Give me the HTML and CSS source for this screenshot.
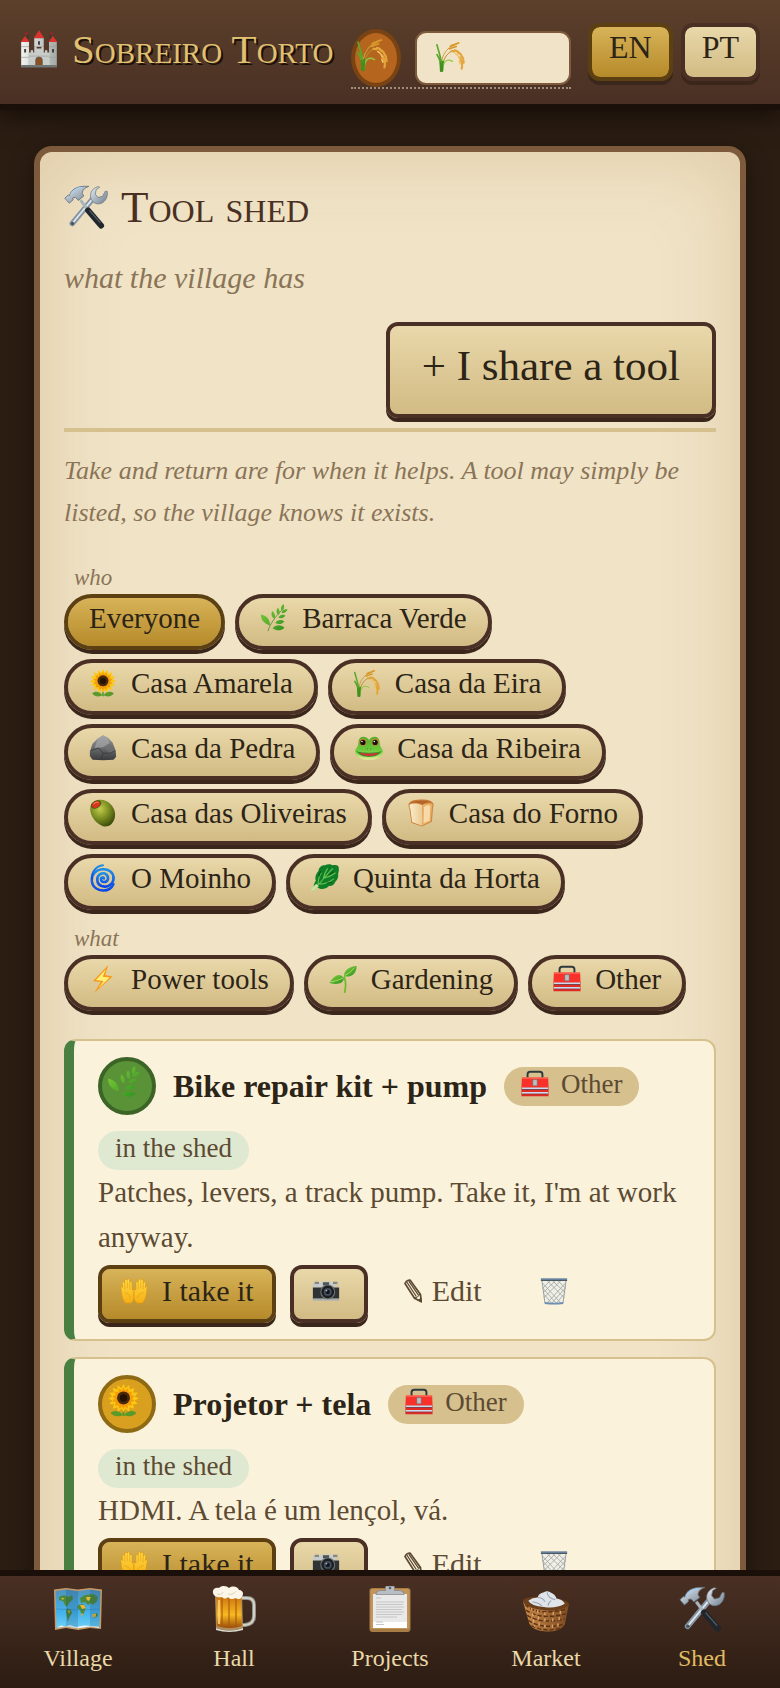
FILE: index.html
```html
<!DOCTYPE html>
<html lang="en">
<head>
<meta charset="utf-8">
<meta name="viewport" content="width=device-width, initial-scale=1">
<title>Sobreiro Torto – Tool shed</title>
<link rel="stylesheet" href="styles.css">
</head>
<body>
<svg class="sprite" width="0" height="0" aria-hidden="true">
  <defs>
    <linearGradient id="g-stone" x1="0" x2="1"><stop offset="0" stop-color="#f2f3f0"/><stop offset="1" stop-color="#a4a9a6"/></linearGradient>
    <linearGradient id="g-steel" x1="0" y1="0" x2="1" y2="1"><stop offset="0" stop-color="#e6eef6"/><stop offset="1" stop-color="#6f7d8c"/></linearGradient>
    <linearGradient id="g-leaf" x1="0" y1="0" x2="1" y2="1"><stop offset="0" stop-color="#86d23c"/><stop offset="1" stop-color="#2c8f1f"/></linearGradient>
    <linearGradient id="g-rock" x1="0" y1="0" x2="0" y2="1"><stop offset="0" stop-color="#9a9b9d"/><stop offset="1" stop-color="#3a3b3d"/></linearGradient>
    <radialGradient id="g-olive" cx=".4" cy=".35" r=".7"><stop offset="0" stop-color="#c3cc4e"/><stop offset=".5" stop-color="#7d9022"/><stop offset="1" stop-color="#3d4c0b"/></radialGradient>
    <linearGradient id="g-frog" x1="0" y1="0" x2="0" y2="1"><stop offset="0" stop-color="#4fae2d"/><stop offset=".6" stop-color="#6ecb3e"/><stop offset="1" stop-color="#e5ee9a"/></linearGradient>
    <linearGradient id="g-bread" x1="0" x2="1"><stop offset="0" stop-color="#fbeccb"/><stop offset="1" stop-color="#eacb92"/></linearGradient>
    <linearGradient id="g-swirl" x1="0" y1="0" x2="0" y2="1"><stop offset="0" stop-color="#1e8fe8"/><stop offset="1" stop-color="#0a46e6"/></linearGradient>
    <linearGradient id="g-beer" x1="0" y1="0" x2="0" y2="1"><stop offset="0" stop-color="#c9700e"/><stop offset=".6" stop-color="#f7b922"/><stop offset="1" stop-color="#9a4a08"/></linearGradient>
    <linearGradient id="g-hand" x1="0" y1="0" x2="0" y2="1"><stop offset="0" stop-color="#ffdc45"/><stop offset="1" stop-color="#f5ae14"/></linearGradient>
    <linearGradient id="g-basket" x1="0" x2="1"><stop offset="0" stop-color="#c9894a"/><stop offset="1" stop-color="#7d4a22"/></linearGradient>
    <linearGradient id="g-sea" x1="0" y1="0" x2="0" y2="1"><stop offset="0" stop-color="#4f93bd"/><stop offset=".6" stop-color="#44b3ee"/><stop offset="1" stop-color="#6fd0f5"/></linearGradient>
  </defs>

  <symbol id="castle" viewBox="0 0 32 32">
    <path d="M6.500 3v4M25.500 3v4" stroke="#333" stroke-width=".7"/>
    <path d="M2.800 3.200L6.500 1.600v2.600zM25.500 1.600l3 1.400-3 1.200z" fill="#a3222c"/>
    <path d="M0.500 10L4.300 5l3.800 5zM23.900 10l3.800-5 3.800 5zM11.500 7L16 .3 20.500 7z" fill="#d9342f"/>
    <path d="M12 7h8v7h-8zM1 10h6.600v21H1zM24.400 10H31v21h-6.600z" fill="url(#g-stone)"/>
    <path d="M7 19h2v-2h2v2h1v-5h2v1.500h4V14h2v5h1v-2h2v2h2v12H7z" fill="#c9cdca"/>
    <path d="M1 14h6.600M24.400 14H31M1 23h6.600M24.400 23H31M7.600 22h16.800" stroke="#9a9f9b" stroke-width=".6"/>
    <path d="M3.500 16h1.600v3H3.500zM27 16h1.600v3H27zM15.200 9.500h1.600v3h-1.600z" fill="#3b3f40"/>
    <path d="M13.200 30v-4.500a2.800 2.800 0 015.600 0V30z" fill="#8a4f20" stroke="#55595a" stroke-width=".6"/>
    <path d="M1 29.500h30V31.500H1z" fill="#6f7573"/>
  </symbol>

  <symbol id="wheat" viewBox="0 0 32 32">
    <g fill="none" stroke-linecap="round">
      <path d="M6 30C6 20 8 12 16 6l7-3" stroke="#c9a03e" stroke-width="1"/>
      <path d="M7 30c1-11 5-18 12-20 5-1 9 3 9 8" stroke="#b98b2d" stroke-width="1"/>
      <path d="M16 5.500l2-1.400M19 4.200l2.400-1.200M22.500 2.600l2-.6M15 8l3-1M19 6.500l3-.8" stroke="#d9982a" stroke-width="1.800"/>
      <path d="M17 10.500l3 .2M20.500 9.500l2.500 1M23 11l2 1.800M25.500 12.500l1.800 2.400M27.500 15.500l1.600 2.600M25.500 17l1.500 3M27 21l1 3.500M29.200 19.500l.4 3M28 25.500l-.4 3" stroke="#e3a53a" stroke-width="2.200"/>
      <path d="M21 13l2.500 2M24 15.500l1.500 3M25 20.500l1 3" stroke="#f0c268" stroke-width="1.500"/>
      <path d="M7 29C8 22 4 12 2 4M7 29c-1-8-3-12-5-15" stroke="#57a82c" stroke-width="1.700"/>
      <path d="M8 30c0-7 3-13 10-9" stroke="#8ecb45" stroke-width="1.300"/>
      <path d="M5.500 22l.5 9M8 21l-.5 10" stroke="#3f8f1e" stroke-width="1.900"/>
    </g>
  </symbol>

  <symbol id="tools" viewBox="0 0 32 32">
    <path d="M20.500 10.500L6 28" stroke="#8593a1" stroke-width="4" stroke-linecap="round"/>
    <path d="M20 11L6 28" stroke="#dfe6ee" stroke-width="1.300" stroke-linecap="round"/>
    <path d="M24.500 1.200C20.500 2.500 18.500 6 19.500 9.500c.8 2.700 3.300 4.500 6 4.200 3.700-.4 6.500-4 6-9l-1.500-.2-1.900 3.700-3.400.9-2-2.500.8-3.400L26 1.600z" fill="url(#g-steel)" stroke="#66717d" stroke-width=".5"/>
    <circle cx="6.200" cy="28" r="1.200" fill="#49535d"/>
    <path d="M12 11l6 8" stroke="#a9b4be" stroke-width="2.200"/>
    <path d="M17.500 18.500L27 29.500" stroke="#20262b" stroke-width="4.300" stroke-linecap="round"/>
    <path d="M18.500 18.500l8 9" stroke="#59636b" stroke-width=".8"/>
    <path d="M.6 9.600L3 7.300l1 .4C5 3.600 9 .3 18 1c-2.500.9-4.400 2-4.800 5l1.200 2-4 3.200-2-2.200-2 .4.200 1.400-2.800 2.400z" fill="url(#g-steel)" stroke="#5f7080" stroke-width=".6"/>
    <path d="M5 7c2-3.500 4.500-4.800 8-5" stroke="#a9cdf0" stroke-width="1" fill="none"/>
  </symbol>

  <symbol id="herb" viewBox="0 0 32 32">
    <path d="M9 31C12 22 17 15 26 6" stroke="#57923a" stroke-width="1" fill="none"/>
    <g fill="url(#g-leaf)">
      <path d="M27 0c1.500 3.500.5 6.500-2 8-2-3-1-6 2-8zM31.500 6c-1 3.200-3.500 5-6.800 4.300C25 7.300 28 5.400 31.500 6zM20.500 4c2.300 3 2.600 6 1 8.500-3-1.500-3.500-5-1-8.500zM14 8c3 2.500 4 5.600 3 9-3.600-1.500-4.800-5-3-9zM29 13c-1.700 3-4.800 4-8 2.700C22.300 12.600 25.500 11.400 29 13zM1 12c7 1.500 10.500 6 10.500 12.500C5 22.500 1 19 1 12zM28 20c-3 3.300-6.700 3.700-10.500 1.600C20 18 24 17.400 28 20zM28 27c-4.200 3.800-9 3.800-13.500.6C18 23.500 23.500 23.400 28 27z"/>
    </g>
  </symbol>

  <symbol id="sunflower" viewBox="0 0 32 32">
    <path d="M16 20v11" stroke="#4c9a2b" stroke-width="1.800"/>
    <path d="M15.500 30C12 25.500 7 25 3.500 28c3 3.500 8 4.300 12 2zM16.500 30c3.500-4.500 8.500-5 12-2-3 3.500-8 4.300-12 2z" fill="#5a9a2b"/>
    <path d="M16 0l2 4 3.500-3 .5 4.400 4.500-1.600-1.200 4.400 4.600.2-2.900 3.600 4 2-4.300 2 3 3.500-4.600.2 1.300 4.300-4.500-1.500L21.500 27 18 23.700 16 27.500l-2-3.800L10.500 27l-.4-4.500L5.600 24l1.300-4.300-4.600-.2 3-3.500L1 14l4-2-2.900-3.600 4.600-.2L5.500 3.800 10 5.400l.5-4.400L14 4z" fill="#fdc713"/>
    <path d="M16 3l1.500 3 3-2 .5 3.700 3.500-.5-1 3.500 3.500 1-2.600 2.300 2.400 2.600-3.400.9.800 3.500-3.600-.6-.8 3.500-2.600-2L16 25l-1.300-3-2.700 2-.8-3.500-3.500.6.700-3.500-3.400-.9 2.500-2.600L5 11.800l3.400-1-1-3.600 3.600.5.500-3.700 3 2z" fill="#f49f0a"/>
    <circle cx="16" cy="13.500" r="6.300" fill="#4b2a08"/><circle cx="16" cy="13.500" r="3.600" fill="#241203"/>
  </symbol>

  <symbol id="rock" viewBox="0 0 32 32">
    <path d="M1 20l3-9 6-6 6-3.500 6 3 5 5.500 3.500 9 .5 7-3 3.500L16 30 4 29.500 1 25z" fill="url(#g-rock)"/>
    <path d="M10 5l6-3.500 6 3 1.500 6-7 4.500-10 1z" fill="#a8a9ab" opacity=".65"/>
    <path d="M23.500 10.500l7 8.500-7 3-7-7z" fill="#6f7072" opacity=".7"/>
    <path d="M2 19l9-3 5 6-2 7" fill="none" stroke="#2f3032" stroke-width=".8"/>
    <path d="M16 22l8 0 6-3" fill="none" stroke="#303133" stroke-width=".7"/>
  </symbol>

  <symbol id="frog" viewBox="0 0 32 32">
    <path d="M16 7c2-5 11-6 12 1 .4 2.500 0 4 1 6 1.300 2.500 3 4 3 6.500C31 26.500 25 29.500 16 29.500S1 26.500 0 20.500C0 18 1.700 16.500 3 14c1-2 .6-3.500 1-6C5 1 14 2 16 7z" fill="url(#g-frog)"/>
    <path d="M1.500 19.500c6 2.500 23 2.500 29 0-2.500 5-8 6.700-14.500 6.700S4 24.500 1.500 19.500z" fill="#3f8f22"/>
    <path d="M5 21.500c6 1.300 16 1.300 22 0-3 3.200-6 3.600-11 3.600s-8-.4-11-3.600z" fill="#d2323a"/>
    <circle cx="9" cy="9.500" r="4.300" fill="#c08a2a"/><circle cx="23" cy="9.500" r="4.300" fill="#c08a2a"/>
    <circle cx="9" cy="9.700" r="3" fill="#14130f"/><circle cx="23" cy="9.700" r="3" fill="#14130f"/>
    <circle cx="8" cy="8.500" r=".9" fill="#fff"/><circle cx="22" cy="8.500" r=".9" fill="#fff"/>
    <path d="M14 16.500v1M18 16.500v1" stroke="#256b12" stroke-width="1"/>
  </symbol>

  <symbol id="olive" viewBox="0 0 32 32">
    <path d="M2 8C5 1 13-1 20 2.500c7 3.600 11 11 9.500 18.500C28 28.500 22 32.500 16 31 7 28.500-1 16 2 8z" fill="url(#g-olive)"/>
    <ellipse cx="8" cy="6.300" rx="6.300" ry="4.300" transform="rotate(-28 8 6.300)" fill="#4d5a10"/>
    <ellipse cx="8" cy="6.300" rx="5" ry="3.400" transform="rotate(-28 8 6.300)" fill="#d5341f"/>
    <path d="M5 6c1.500-2 4-2.700 6-2" stroke="#f07b5a" stroke-width="1.200" fill="none"/>
  </symbol>

  <symbol id="bread" viewBox="0 0 32 32">
    <path d="M2 5C4 1.500 10 .5 17 .5S28.500 2 30 5c.8 2.600 0 4-.5 6L28.500 26l-11.500 5.500L5 27 3 12C2 9.500 1.300 7.500 2 5z" fill="#c97d38"/>
    <path d="M3 6.500c4-2 10-1.500 14.500.5L17 30.500 5.800 26.200 4 12C3.200 10 2.500 8.500 3 6.500z" fill="url(#g-bread)"/>
    <path d="M17.500 7C21 4.500 28 4 29 6c.6 2-.4 3.500-.6 5L27.500 25.500 17 30.500z" fill="#e9b168"/>
    <path d="M19.500 9c2.500-2 6-2.500 7-1l-.8 16.500-6.700 3z" fill="#f6dba9"/>
    <path d="M4 4.500C8 1.500 24 1 28.500 4 24 3.400 20 4.500 17.500 6 13 4.300 8 4 4 4.500z" fill="#b4642a"/>
  </symbol>

  <symbol id="cyclone" viewBox="0 0 32 32">
    <g fill="none" stroke="url(#g-swirl)" stroke-linecap="round">
      <path d="M17 16.500c0-2-3.500-1.500-3.300 1.200.3 3.600 6.300 4 7.700.3C23 12.800 18 9.300 13.700 11.200 7.500 14 8.400 23 14.500 25.200c7.500 2.500 14-3.200 13.500-10" stroke-width="3"/>
      <path d="M28 16C28 9 22 5.500 15.500 6 7 6.700 2.500 13 3.200 19.500 4 26.500 10 30.500 16.500 30.300c5 0 9.500-3 11.500-7.300" stroke-width="2.800"/>
      <path d="M3.500 17C2.500 9 8 2.500 16 1.500" stroke-width="2.200"/>
    </g>
  </symbol>

  <symbol id="greens" viewBox="0 0 32 32">
    <path d="M3 27c0-3 .5-5 2.500-8C4 15 6 10.500 8.500 8 9 4 12 1 16 1.500 19-.5 23 0 24.500 1.500c3-1 7-.5 7 2 .5 2.500.5 5-.5 7.500.5 4-.5 7-3 9-1.500 4-4.500 5.500-7.500 5C16 29.500 11 29 8 27z" fill="#0f7f27"/>
    <path d="M1.500 31C9 24 16 14 25 5M8 24c0-6 1-10 4-14M10 23c6 0 11-2 16-6M14 17c1-5 2-8 5-12M15 16c5-1 9-3 13-6" stroke="#6cc452" stroke-width="1.200" fill="none"/>
    <path d="M0 30.500c1-3 3-5.500 6-8l3 3c-3 3-5 4.500-8 6z" fill="#c6e2a0"/>
    <path d="M18 22l6-1M21 12l5-3M9 14l2-6" stroke="#0b5a1a" stroke-width="1.400"/>
  </symbol>

  <symbol id="bolt" viewBox="0 0 32 32">
    <path d="M22 0L4.500 18.500l9 1L6 32 27 13l-8.500-1.500z" fill="#f79a1c"/>
    <path d="M19.500 4.500L8 17.200l8.500 1L11 26.500 23.500 14.300l-8-1z" fill="#fff176"/>
  </symbol>

  <symbol id="seedling" viewBox="0 0 32 32">
    <path d="M18 31c1.500-7 1.500-12-.5-17" stroke="#6dbb2b" stroke-width="2" fill="none" stroke-linecap="round"/>
    <path d="M17 13C17 6 23 1.500 31.500 1c.3 8-5.500 13.500-14.500 12z" fill="url(#g-leaf)"/>
    <path d="M17 15.500C14 8.500 6 10.500.5 20.500c7 2 15.500 2 16.500-5z" fill="url(#g-leaf)"/>
    <path d="M18 12c4-2 8-5 11-9M2 19.500c5-1 9-2.500 14-4.500" stroke="#c6ee7a" stroke-width=".8" fill="none"/>
  </symbol>

  <symbol id="toolbox" viewBox="0 0 32 32">
    <path d="M7.500 9V5q0-3 3-3h11q3 0 3 3v4" stroke="#2d3b3e" stroke-width="2.200" fill="none"/>
    <path d="M1 8.500h30l.5 11H.5z" fill="#f8322a"/><path d="M1 8.500h30v1.500H1z" fill="#ff6a58"/>
    <path d="M.5 19.500h31V30H.5z" fill="#e02a24"/>
    <path d="M1 20h30v2H1zM1 25h30v2H1z" fill="#cdd9ee"/>
    <path d="M1 22h30v.8H1zM1 27h30v.8H1z" fill="#5c3c4c"/>
    <path d="M13.500 11h5v7h-5z" fill="#b8c0c4" stroke="#626b70" stroke-width=".6"/>
  </symbol>

  <symbol id="hands" viewBox="0 0 32 32">
    <path d="M1 13c-1-2 1-3 2-1L2.500 7c0-2 2.500-2 2.800 0L5.500 4c.2-2 2.700-2 2.800 0v0c.2-2.500 2.800-2.300 2.800-.3l.2 2.300c1-1.600 2.600-.8 2.500 1L14 15c.8-1.500 2-1.500 2 .5v8c0 3-2 5.500-4 6.500H6.500C3 27 1.500 20 1 13z" fill="url(#g-hand)" stroke="#db8f12" stroke-width=".7"/>
    <path d="M31 13c1-2-1-3-2-1l.5-5c0-2-2.500-2-2.800 0l-.2-3c-.2-2-2.700-2-2.800 0v0c-.2-2.500-2.800-2.300-2.800-.3L20.700 6c-1-1.600-2.600-.8-2.500 1L18 15c-.8-1.500-2-1.500-2 .5v8c0 3 2 5.500 4 6.500h5.500C29 27 30.500 20 31 13z" fill="url(#g-hand)" stroke="#db8f12" stroke-width=".7"/>
    <path d="M5.500 7v7M8.300 5v8M11.200 6v8M26.500 7v7M23.700 5v8M20.800 6v8M5 18c3 0 6 2 7 6M27 18c-3 0-6 2-7 6" stroke="#df9a16" stroke-width=".7" fill="none"/>
  </symbol>

  <symbol id="camera" viewBox="0 0 32 32">
    <path d="M1 7h9l1-2h10l1 2h9v5H1z" fill="#c6cacb"/><path d="M3 5.500h5V8H3zM24 5.500h5V8h-5z" fill="#83898b"/>
    <path d="M1 12h30v13H1z" fill="#303334"/><path d="M1 24.500h30v2.500H1z" fill="#a9aeb0"/>
    <path d="M12.500 6h7v3.500h-7z" fill="#4c5356"/>
    <circle cx="18" cy="17" r="8.500" fill="#6b7072"/><circle cx="18" cy="17" r="7.200" fill="#1c1f21"/><circle cx="18" cy="17" r="4.500" fill="#46505c"/><circle cx="18" cy="17" r="2.500" fill="#12161b"/><circle cx="16.500" cy="15.500" r="1" fill="#a9b9c9"/>
    <circle cx="28" cy="9.500" r="1.300" fill="#f5c84c"/>
  </symbol>

  <symbol id="pencil" viewBox="0 0 18 24">
    <path d="M1 4.500Q2.500 1 6 1l10.500 14.500.8 7.300-6.800-3.500z" fill="none" stroke="currentColor" stroke-width="1.700" stroke-linejoin="round"/>
    <path d="M2.800 3l9.500 14.500M4.800 2.200l9.700 14" stroke="currentColor" stroke-width="1.300"/>
    <path d="M10.500 19l3-1 2.500-3 1.500 8z" fill="none" stroke="currentColor" stroke-width="1"/><path d="M14 21l2.500-2 1 4z" fill="currentColor"/>
  </symbol>

  <symbol id="trash" viewBox="0 0 32 32">
    <path d="M2 3h28l-3.500 27.500q-10.500 2-21 0z" fill="#f1efe4"/>
    <path d="M3 7l22 24M3.500 13l16 18M5 20l9 11M8 4l20 20M14 4l15 14M20 4l9.500 9M29 7L7 31M28.500 13l-16 18M27 20l-9 11M24 4L4 24M18 4L3.500 18M12 4l-9 9" stroke="#9aa2a6" stroke-width=".9"/>
    <path d="M2.200 4l3.500 26M29.800 4l-3.500 26" stroke="#8b969e" stroke-width="1"/>
    <path d="M1 1.500h30v2H1z" fill="#64809c"/><path d="M1 3.500h30v1H1z" fill="#3a4652"/>
    <path d="M5.300 28.500q10.700 1.800 21.400 0l-.3 2.300q-10.400 1.500-20.800 0z" fill="#6f8eb3"/>
  </symbol>

  <symbol id="map" viewBox="0 0 48 42">
    <path d="M0 1.500L12 0l12 1.500L36 0l12 1.500-1 39.500-11-1-12 2-12-2L1 42z" fill="#c99a68"/>
    <path d="M1.500 3L12 1.500 24 3l12-1.500L46.500 3l-1 36.500L36 38.500 24 40.300 12 38.500 2.500 40z" fill="url(#g-sea)"/>
    <path d="M5 9l5-2 5 2 3-2 1 4-4 4-2 4-2-2-2-4-4-1zM13 20l4 2 1 3-3 5-1 4-1-5-1-5zM26 10l5-3 8-1 5 3-1 4-4 4-2-2-3 2-3-3-4 1zM24 17l5-1 3 3-2 6-2 3-2-6-3-2zM39 26l4-1 1 3-4 2z" fill="#4e8a3b"/>
    <path d="M26 17l4 0 2 3-4 1zM32 9l5 0-2 4-2-1zM14 22l2 1-1 3zM38 26l4-.5 0 3-3 1zM27 26l2-1-1 4zM7 10l3 0-1 2z" fill="#e8b83a"/>
    <path d="M3 39.500l4-2 4 1 5-1.500 6 2 8-1.500 8 .5 7 .5v1.500l-9-1.500-12 1.800-12-1.800z" fill="#f1f5f5"/>
    <path d="M12 1.500L24 3v37l-12-1.500zM36 1.500L46.500 3l-1 36.500L36 38.500z" fill="#123a5c" opacity=".18"/>
    <path d="M2 21q22 2 44 0" stroke="#24608c" stroke-width=".6" opacity=".5" fill="none"/>
  </symbol>

  <symbol id="beer" viewBox="0 0 44 46">
    <path d="M28 12h7q7 0 7 7v11q0 8-9 9h-5" fill="none" stroke="#8f9288" stroke-width="4"/>
    <path d="M28 12h7q7 0 7 7v11q0 8-9 9h-5" fill="none" stroke="#d3d1c6" stroke-width="2"/>
    <path d="M3 8h27l1 34q-14 5-27 0z" fill="#b08d5c"/><path d="M4.500 9H29l.8 31q-12 4-25 0z" fill="url(#g-beer)"/>
    <path d="M10 12v28M17 12v29M24 12v28" stroke="#a8580b" stroke-width="1.800" opacity=".6"/><path d="M7 14v24" stroke="#ffd97c" stroke-width="1.500"/>
    <path d="M1 7c-1-4 3-6 6-5 3-3 8-2 10 0 4-3 9-1 10 2 4 0 5 4 3 7-2 3-5 2-7 1-2 2-6 1-7-1-3 3-5 1-6 0-3 1-8 0-9-4z" fill="#fbf6e8"/>
    <path d="M5 8c3 1 5 0 6-2M16 8c4 1 7-1 8-3" stroke="#ddd2bb" fill="none"/>
    <path d="M4 42q13 5 27 0v2q-14 4-27 0z" fill="#dcdcd3"/>
  </symbol>

  <symbol id="clipboard" viewBox="0 0 42 46">
    <rect x=".5" y="2" width="41" height="44" rx="3" fill="#a87c45"/><rect x="1.500" y="3" width="39" height="40" rx="2" fill="#c2965a"/>
    <path d="M4 8h34v34H4z" fill="#e9e9e9"/><path d="M4 36h34v6H4z" fill="#fff"/>
    <path d="M7 12h5M7 16h28M7 18.500h27M7 21h28M7 23.500h26M7 26h28M7 28.500h26M7 31h21M7 36h7M7 38.500h8" stroke="#c6c6c6" stroke-width="1.200"/>
    <path d="M7 8.500q0-3.500 4-4h5.500V1q0-1 1.500-1h6q1.500 0 1.500 1v3.500H31q4 .5 4 4z" fill="#b9bec4" stroke="#7e8389" stroke-width=".7"/><circle cx="21" cy="2" r="1.300" fill="#596069"/>
  </symbol>

  <symbol id="basket" viewBox="0 0 46 44">
    <path d="M6 16C3 6 4 1 8 1s6 6 6 12M34 18C28 8 32 3 38 3s7 8 5 17" fill="none" stroke="#4a2d18" stroke-width="2"/>
    <path d="M1 15q22-7 44 2l-4 20q-5 7-18 6.500Q10 43 7 36z" fill="url(#g-basket)"/>
    <path d="M3 18q12 11 40 4M4 23q14 10 38 3.500M5 28q14 9 36 3.500M6 33q14 9 34 3.500M9 38q14 7 29 2" stroke="#5a3314" stroke-width="1.400" fill="none" stroke-dasharray="4 2"/>
    <path d="M9 20l3 19M15 23l2 18M22 25v18M30 25l-1 17M37 24l-3 16" stroke="#e0a868" stroke-width="1.300" stroke-dasharray="3 3"/>
    <path d="M1 15q-1-3 6-4 20-3 34 3 5 2 4 5-10 6-24 4Q3 21 1 15z" fill="#6b3f1c"/>
    <path d="M6 14q4-3 9-3 1-4 6-5 3-2 6 0 5 2 6 6 6 1 8 5-9 5-20 3Q9 19 6 14z" fill="#dfe3ea"/>
    <path d="M15 11q5 0 7 4M24 6q1 6 8 7M10 15q6 1 9 4M28 14q-3 2-3 5" stroke="#9da5b3" fill="none"/>
  </symbol>
</svg>

<div class="app">
  <header class="topbar">
    <a class="brand" href="#village"><svg class="icon icon-brand"><use href="#castle"/></svg><span>Sobreiro Torto</span></a>
    <div class="whoami">
      <span class="avatar avatar-eira"><svg class="icon icon-avatar"><use href="#wheat"/></svg></span>
      <label class="house-field"><svg class="icon icon-field"><use href="#wheat"/></svg><input type="text" aria-label="Your house"></label>
    </div>
    <div class="langs">
      <button class="btn lang gold" type="button">EN</button>
      <button class="btn lang" type="button">PT</button>
    </div>
  </header>

  <main class="page">
    <section class="panel">
      <div class="panel-head">
        <h1><svg class="icon icon-title"><use href="#tools"/></svg><span>Tool shed</span></h1>
        <p class="tagline">what the village has</p>
        <button class="btn share" type="button">+ I share a tool</button>
      </div>
      <p class="hint">Take and return are for when it helps. A tool may simply be listed, so the village knows it exists.</p>

      <p class="group-label who" id="who">who</p>
      <div class="chips" role="group" aria-labelledby="who">
        <button class="btn chip gold" type="button">Everyone</button>
        <button class="btn chip" type="button"><svg class="icon"><use href="#herb"/></svg>Barraca Verde</button>
        <button class="btn chip" type="button"><svg class="icon"><use href="#sunflower"/></svg>Casa Amarela</button>
        <button class="btn chip" type="button"><svg class="icon"><use href="#wheat"/></svg>Casa da Eira</button>
        <button class="btn chip" type="button"><svg class="icon"><use href="#rock"/></svg>Casa da Pedra</button>
        <button class="btn chip" type="button"><svg class="icon"><use href="#frog"/></svg>Casa da Ribeira</button>
        <button class="btn chip" type="button"><svg class="icon"><use href="#olive"/></svg>Casa das Oliveiras</button>
        <button class="btn chip" type="button"><svg class="icon"><use href="#bread"/></svg>Casa do Forno</button>
        <button class="btn chip" type="button"><svg class="icon"><use href="#cyclone"/></svg>O Moinho</button>
        <button class="btn chip" type="button"><svg class="icon"><use href="#greens"/></svg>Quinta da Horta</button>
      </div>
      <p class="group-label what" id="what">what</p>
      <div class="chips" role="group" aria-labelledby="what">
        <button class="btn chip" type="button"><svg class="icon"><use href="#bolt"/></svg>Power tools</button>
        <button class="btn chip" type="button"><svg class="icon"><use href="#seedling"/></svg>Gardening</button>
        <button class="btn chip" type="button"><svg class="icon"><use href="#toolbox"/></svg>Other</button>
      </div>

      <div class="tool-list">
        <article class="tool">
          <div class="tool-head">
            <span class="avatar avatar-verde"><svg class="icon icon-avatar"><use href="#herb"/></svg></span>
            <h2>Bike repair kit + pump</h2>
            <span class="tag"><svg class="icon"><use href="#toolbox"/></svg>Other</span>
          </div>
          <div class="status"><span class="tag tag-in">in the shed</span></div>
          <p class="about">Patches, levers, a track pump. Take it, I'm at work anyway.</p>
          <div class="actions">
            <button class="btn act gold" type="button"><svg class="icon"><use href="#hands"/></svg>I take it</button>
            <button class="btn act photo" type="button" aria-label="Photo"><svg class="icon"><use href="#camera"/></svg></button>
            <button class="btn act ghost" type="button"><svg class="icon icon-pencil"><use href="#pencil"/></svg>Edit</button>
            <button class="btn act ghost" type="button" aria-label="Delete"><svg class="icon"><use href="#trash"/></svg></button>
          </div>
        </article>
        <article class="tool">
          <div class="tool-head">
            <span class="avatar avatar-amarela"><svg class="icon icon-avatar"><use href="#sunflower"/></svg></span>
            <h2>Projetor + tela</h2>
            <span class="tag"><svg class="icon"><use href="#toolbox"/></svg>Other</span>
          </div>
          <div class="status"><span class="tag tag-in">in the shed</span></div>
          <p class="about">HDMI. A tela é um lençol, vá.</p>
          <div class="actions">
            <button class="btn act gold" type="button"><svg class="icon"><use href="#hands"/></svg>I take it</button>
            <button class="btn act photo" type="button" aria-label="Photo"><svg class="icon"><use href="#camera"/></svg></button>
            <button class="btn act ghost" type="button"><svg class="icon icon-pencil"><use href="#pencil"/></svg>Edit</button>
            <button class="btn act ghost" type="button" aria-label="Delete"><svg class="icon"><use href="#trash"/></svg></button>
          </div>
        </article>
      </div>
    </section>
  </main>

  <nav class="tabs">
    <a href="#village"><svg class="icon"><use href="#map"/></svg>Village</a>
    <a href="#hall"><svg class="icon"><use href="#beer"/></svg>Hall</a>
    <a href="#projects"><svg class="icon"><use href="#clipboard"/></svg>Projects</a>
    <a href="#market"><svg class="icon"><use href="#basket"/></svg>Market</a>
    <a href="#shed" class="current" aria-current="page"><svg class="icon"><use href="#tools"/></svg>Shed</a>
  </nav>
</div>
</body>
</html>
```

FILE: styles.css
```css
* { box-sizing: border-box; }

body {
  margin: 0;
  background: #2b1d12;
  color: #2c2416;
  font-family: "Liberation Serif", serif;
}

h1, h2, p { margin: 0; }

.sprite { position: absolute; }

.icon {
  width: 28px;
  height: 28px;
  flex: none;
}

.app {
  display: flex;
  flex-direction: column;
  height: 100vh;
}

/* Top bar */
.topbar {
  position: relative;
  z-index: 1;
  display: flex;
  align-items: center;
  justify-content: space-between;
  padding: 15px 20px 15px;
  background: linear-gradient(#5c402b, #4a3024);
  box-shadow: 0 6px 0 #1a1009, 0 10px 24px rgba(0, 0, 0, .6);
}

.brand {
  display: flex;
  align-items: center;
  gap: 14px;
  padding-bottom: 6px;
  color: #e0c071;
  font-size: 41px;
  font-variant-caps: small-caps;
  line-height: 48px;
  text-decoration: none;
  text-shadow: 2px 2px 0 #1a1009;
  white-space: nowrap;
}

.icon-brand { width: 38px; height: 38px; }

.whoami {
  display: flex;
  align-items: center;
  gap: 14px;
  padding-top: 14px;
  border-bottom: 2px dotted #a08c78;
}

.avatar {
  display: flex;
  flex: none;
  align-items: center;
  justify-content: center;
  width: 58px;
  height: 58px;
  padding: 0 7px 7px 0;
  border: 4px solid;
  border-radius: 50%;
}

.icon-avatar { width: 33px; height: 33px; }

.avatar-eira { width: 50px; border-color: #7a4314; background: #b5651d; }
.avatar-verde { border-color: #3d6427; background: #5a9238; }
.avatar-amarela { border-color: #8f6a14; background: #d9a01f; }

.house-field {
  display: flex;
  align-items: center;
  width: 156px;
  height: 54px;
  padding: 0 10px 4px 18px;
  border: 2px solid #7d5a3c;
  border-radius: 11px;
  background: #f0e3c8;
}

.icon-field { width: 31px; height: 31px; }

.house-field input {
  flex: 1;
  min-width: 0;
  border: 0;
  outline: 0;
  background: none;
  color: inherit;
  font: inherit;
  font-size: 28px;
}

.langs { display: flex; gap: 8px; }

/* Buttons */
.btn {
  display: inline-flex;
  align-items: center;
  border: 4px solid #4a3024;
  border-radius: 12px;
  background: linear-gradient(#e9d8aa, #d2bb84) padding-box;
  box-shadow: 0 4px 0 #3a261a;
  color: #2c2416;
  font-family: inherit;
  font-size: 30px;
  white-space: nowrap;
}

.btn.gold {
  border-color: #5c4012;
  background: linear-gradient(#d8b358, #b58a2a) padding-box;
}

.btn.lang {
  padding: 0 17px 10px;
  font-size: 32px;
  line-height: 40px;
}

.btn.share {
  align-self: flex-end;
  margin-top: 23px;
  padding: 10px 32px 18px;
  font-size: 43px;
  line-height: 60px;
}

.btn.chip {
  gap: 14px;
  padding: 0 21px 8px;
  border-radius: 28px;
  font-size: 29px;
  line-height: 40px;
}

.btn.act {
  gap: 14px;
  padding: 0 18px 6px;
  line-height: 44px;
}

.btn.photo { padding-right: 24px; }

.btn.ghost {
  gap: 10px;
  border-color: transparent;
  background: none;
  box-shadow: none;
  color: #5c4a32;
}

.icon-pencil { width: 18px; height: 24px; }

/* Panel */
.page {
  flex: 1;
  min-height: 0;
  padding: 42px 34px 0;
  overflow: hidden auto;
  scrollbar-width: none;
}

.panel {
  padding: 25px 24px 40px;
  border: 6px solid #7d5a3c;
  border-radius: 18px;
  background: #f0e3c6;
  box-shadow: inset 0 0 80px rgba(160, 110, 50, .22), 0 8px 24px rgba(0, 0, 0, .4);
}

.panel-head {
  display: flex;
  flex-direction: column;
  padding-bottom: 10px;
  border-bottom: 4px solid #d6c08e;
}

h1 {
  display: flex;
  align-items: center;
  gap: 13px;
  color: #4a3024;
  font-size: 45px;
  font-weight: 400;
  font-variant-caps: small-caps;
  line-height: 60px;
}

.icon-title { width: 44px; height: 44px; }

.tagline {
  margin-top: 20px;
  color: #8a7458;
  font-size: 30px;
  font-style: italic;
  line-height: 42px;
}

.hint {
  margin-top: 18px;
  color: #8a7458;
  font-size: 26px;
  font-style: italic;
  line-height: 42px;
}

.group-label {
  padding-left: 10px;
  color: #8a7458;
  font-size: 23px;
  font-style: italic;
  line-height: 32px;
}

.who { margin-top: 28px; }
.what { margin-top: 13px; }

.chips {
  display: flex;
  flex-wrap: wrap;
  gap: 9px 10px;
}

/* Tools */
.tool-list {
  display: grid;
  gap: 16px;
  margin-top: 28px;
}

.tool {
  padding: 16px 24px;
  border: 2px solid #d6c08e;
  border-left: 10px solid #4a7f42;
  border-radius: 12px;
  background: #fbf2dc;
}

.tool-head {
  display: flex;
  flex-wrap: wrap;
  align-items: center;
  gap: 17px;
}

h2 {
  font-size: 32px;
  font-weight: 700;
  line-height: 44px;
}

.tag {
  display: inline-flex;
  align-items: center;
  gap: 12px;
  padding: 0 17px 5px;
  border-radius: 20px;
  background: #d6c08e;
  color: #5c4a32;
  font-size: 27px;
  line-height: 34px;
}

.tag-in { background: #dfe8d0; }

.status { display: flex; margin-top: 16px; }

.about {
  color: #5c4a32;
  font-size: 29px;
  line-height: 45px;
}

.actions {
  display: flex;
  flex-wrap: wrap;
  gap: 14px;
  margin-top: 5px;
}

/* Bottom tabs */
.tabs {
  position: relative;
  display: grid;
  grid-template-columns: repeat(5, 1fr);
  border-top: 6px solid #1a1009;
  background: linear-gradient(#4a3024, #2c1c12);
}

.tabs a {
  display: flex;
  flex-direction: column;
  align-items: center;
  gap: 12px;
  padding: 10px 0 16px;
  color: #ead9a8;
  font-size: 24px;
  line-height: 28px;
  text-decoration: none;
}

.tabs .current { color: #e0bc62; }

.tabs .icon { width: 48px; height: 46px; }
```
